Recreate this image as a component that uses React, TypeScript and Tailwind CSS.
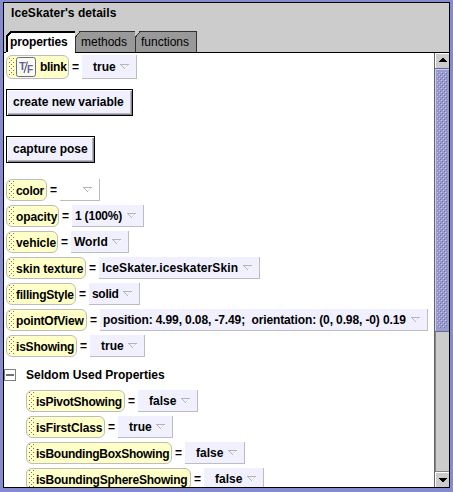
import React from "react";

type Row = { name: string; chip: string; value: string; tile: string; pad?: string; track?: string; vtrack?: string; white?: boolean };

const rows: Row[] = [
  { name: "color", chip: "w-[41px]", track: "tracking-[-0.3px]", value: "", tile: "w-[40px]", white: true },
  { name: "opacity", chip: "w-[53px]", track: "tracking-[-0.1px]", value: "1 (100%)", vtrack: "tracking-[-0.2px]", tile: "w-[72px]" },
  { name: "vehicle", chip: "w-[52px]", track: "tracking-[-0.1px]", value: "World", tile: "w-[58px]" },
  { name: "skin texture", chip: "w-[80px]", value: "IceSkater.iceskaterSkin", vtrack: "tracking-[0.12px]", tile: "w-[161px]" },
  { name: "fillingStyle", chip: "w-[70px]", track: "tracking-[-0.25px]", value: "solid", vtrack: "tracking-[-0.3px]", tile: "w-[51px]" },
  { name: "pointOfView", chip: "w-[81px]", track: "tracking-[-0.2px]", value: "position: 4.99, 0.08, -7.49;  orientation: (0, 0.98, -0) 0.19", vtrack: "tracking-[-0.12px]", tile: "w-[328px]" },
  { name: "isShowing", chip: "w-[71px]", track: "tracking-[-0.2px]", value: "true", tile: "w-[55px]", pad: "pl-[11px]" },
];

const seldom: Row[] = [
  { name: "isPivotShowing", chip: "w-[99px]", track: "tracking-[-0.25px]", value: "false", tile: "w-[60px]", pad: "pl-[11px]" },
  { name: "isFirstClass", chip: "w-[79px]", track: "tracking-[-0.15px]", value: "true", tile: "w-[55px]", pad: "pl-[11px]" },
  { name: "isBoundingBoxShowing", chip: "w-[146px]", track: "tracking-[-0.27px]", value: "false", tile: "w-[60px]", pad: "pl-[11px]" },
  { name: "isBoundingSphereShowing", chip: "w-[165px]", track: "tracking-[-0.23px]", value: "false", tile: "w-[60px]", pad: "pl-[11px]" },
];

function Grip() {
  return (
    <svg width="6" height="18" className="shrink-0" shapeRendering="crispEdges" fill="#77775c">
      {[0, 4, 8, 12, 16].map((y) => (
        <g key={y}>
          <rect x="0" y={y} width="1" height="1" />
          <rect x="4" y={y} width="1" height="1" />
          <rect x="2" y={y + 2} width="1" height="1" />
        </g>
      ))}
    </svg>
  );
}

function BoolIcon() {
  return (
    <svg width="20" height="20" className="mr-[3px] ml-px shrink-0" fontFamily="Liberation Sans, sans-serif" fontSize="11" fontWeight="bold" fill="#62649f">
      <rect x="0.5" y="0.5" width="19" height="19" rx="2" fill="#fbfbec" stroke="#6668a6" />
      <text x="3" y="13">T</text>
      <text x="11" y="16" fontSize="10">F</text>
      <path d="M11.5 4.5L8 16" fill="none" stroke="#62649f" strokeWidth="1.2" />
    </svg>
  );
}

function Arrow() {
  return (
    <svg width="9" height="6" className="mr-[7px] ml-auto shrink-0" shapeRendering="crispEdges">
      <path d="M0 0h9v1H0zM1 1h1v1H1zM2 2h1v1H2zM3 3h1v1H3zM4 4h1v1H4z" fill="#b3b3b8" />
      <path d="M7 1h1v1H7zM6 2h1v1H6zM5 3h1v1H5z" fill="#dadae2" />
      <path d="M8 1h1v1H8zM7 2h1v1H7zM6 3h1v1H6zM5 4h1v1H5z" fill="#fff" />
    </svg>
  );
}

function Property({ row, boolIcon }: { row: Row; boolIcon?: boolean }) {
  return (
    <div className={`flex shrink-0 ${boolIcon ? "h-[24px]" : "h-[22px]"}`}>
      <div className={`flex items-center rounded-[6px] border border-[#bdbdbd] bg-[#ffffc8] pl-[2px] ${row.chip}`}>
        <Grip />
        {boolIcon && <BoolIcon />}
        <span className={`ml-px leading-[14px] ${boolIcon ? "" : "pt-px"} ${row.track ?? ""}`}>{row.name}</span>
      </div>
      <span className="flex w-[13px] items-center justify-center pt-px">=</span>
      <div className={`flex items-center border-r border-b border-[#bdbdbd] ${row.white ? "bg-white" : "bg-[#f0f0ff]"} ${row.pad ?? "pl-[3px]"} ${row.tile}`}>
        <span className={`leading-[14px] ${row.vtrack ?? ""}`}>{row.value}</span>
        <Arrow />
      </div>
    </div>
  );
}

function Button({ label, width }: { label: string; width: string }) {
  return (
    <button className={`flex h-[27px] items-center border border-black bg-[#f0f0ff] pl-[6px] text-left shadow-[inset_1px_1px_#fff,inset_-1px_-1px_#85858f,inset_-2px_-2px_#b7b7c3] ${width}`}>
      {label}
    </button>
  );
}

function Tab({ label, width, active }: { label: string; width: string; active?: boolean }) {
  return (
    <div className={`relative flex items-center ${width} ${active ? "-mb-px h-[22px] font-bold" : "h-[21px] font-normal"}`}>
      <svg className="absolute inset-0 h-full w-full" shapeRendering="crispEdges">
        <path d="M0 22V6L5 0H100V22Z" fill={active ? "#fff" : "#999"} />
        <path d={active ? "M0.5 21V6L5 1H100" : "M0.5 21V6L5 0.5H100"} fill="none" stroke={active ? "#000" : "#333"} strokeWidth={active ? 2 : 1} />
      </svg>
      <span className={`relative ${active ? "pl-[4px] tracking-[-0.1px]" : "pt-px pl-[6px]"}`}>{label}</span>
    </div>
  );
}

function ScrollButton({ down }: { down?: boolean }) {
  return (
    <div className="flex h-[15px] w-full shrink-0 items-start justify-center border-t border-l border-white bg-[#ccc] pt-1">
      <svg width="8" height="4" shapeRendering="crispEdges" className={down ? "mt-px rotate-180" : ""}>
        <path d="M3 0h2v1h1v1h1v1h1v1H0V3h1V2h1V1h1z" />
      </svg>
    </div>
  );
}

export default function App() {
  return (
    <div className="h-[492px] w-[453px] overflow-hidden bg-[#848ccf] pt-[2px] pl-[3px] font-['Liberation_Sans',Arial,sans-serif] text-[12px] leading-[15px] font-bold whitespace-pre text-black">
      <div className="flex h-[486px] w-[447px] flex-col border border-black bg-white">
        <header className="flex h-[50px] shrink-0 flex-col justify-between border-b border-black bg-[#ccc]">
          <div className="pt-[3px] pl-[7px] tracking-[0.06px]">IceSkater's details</div>
          <div className="flex h-[21px] items-start pl-[2px]">
            <Tab label="properties" width="w-[69px]" active />
            <Tab label="methods" width="w-[60px]" />
            <Tab label="functions" width="w-[61px]" />
            <div className="h-full w-px bg-[#333]" />
          </div>
        </header>
        <div className="flex min-h-0 flex-1">
          <main className="flex min-w-0 flex-1 flex-col overflow-hidden pt-[2px] pl-[2px]">
            <Property boolIcon row={{ name: "blink", chip: "w-[63px]", track: "tracking-[-0.3px]", value: "true", tile: "w-[55px]", pad: "pl-[11px]" }} />
            <div className="flex shrink-0 flex-col gap-5 pt-[10px] pb-4">
              <Button label="create new variable" width="w-[127px]" />
              <Button label="capture pose" width="w-[89px]" />
            </div>
            <div className="flex shrink-0 flex-col gap-1">
              {rows.map((row) => <Property key={row.name} row={row} />)}
            </div>
            <div className="-ml-[2px] flex h-[33px] shrink-0 items-center pt-[3px]">
              <div className="flex h-[12px] w-[12px] items-center justify-center border border-[#808080]">
                <div className="h-[2px] w-2 bg-[#707070]" />
              </div>
              <span className="pt-px pl-[10px]">Seldom Used Properties</span>
            </div>
            <div className="flex shrink-0 flex-col gap-1 pl-5">
              {seldom.map((row) => <Property key={row.name} row={row} />)}
            </div>
          </main>
          <aside className="flex w-[15px] shrink-0 flex-col border-l border-[#666] bg-[#ccc]">
            <ScrollButton />
            <svg width="14" height="264" className="shrink-0" shapeRendering="crispEdges">
              <defs>
                <pattern id="bumps" x="2" y="4" width="4" height="4" patternUnits="userSpaceOnUse">
                  <path d="M0 0h1v1H0zM2 2h1v1H2z" fill="#ccccff" />
                  <path d="M1 1h1v1H1zM3 3h1v1H3z" fill="#7373a8" />
                </pattern>
              </defs>
              <rect width="14" height="264" fill="#9999cc" />
              <path d="M0 0h14v1H0zM0 263h14v1H0z" fill="#666699" />
              <path d="M0 1h14v1H0zM0 1h1v262H0z" fill="#ccccff" />
              <rect x="2" y="4" width="10" height="256" fill="url(#bumps)" />
            </svg>
            <div className="flex-1 border-b border-l border-[#858585] bg-[#ccc]" />
            <ScrollButton down />
          </aside>
        </div>
      </div>
    </div>
  );
}
